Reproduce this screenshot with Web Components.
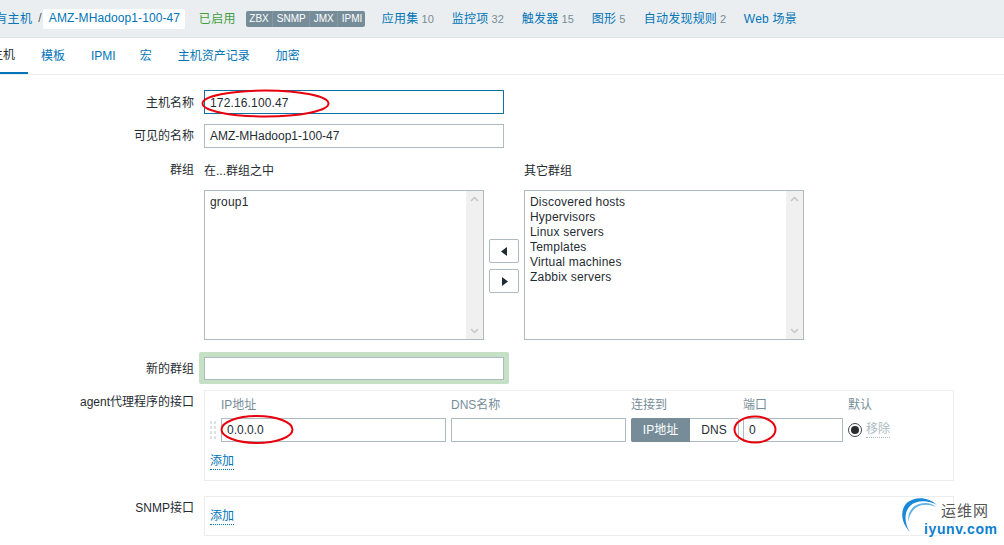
<!DOCTYPE html>
<html lang="zh"><head><meta charset="utf-8"><title>主机</title>
<style>
html,body{margin:0;padding:0;height:545px;overflow:hidden;background:#fff}
body{font:12px "Liberation Sans","Noto Sans CJK SC",sans-serif;color:#1f2c33;position:relative}
</style></head><body>
<z-header></z-header>
<z-tabs></z-tabs>
<z-form></z-form>
<z-marks></z-marks>
<z-logo></z-logo>
<script>
function def(name,css,html){customElements.define(name,class extends HTMLElement{constructor(){super();const r=this.attachShadow({mode:'open'});r.innerHTML='<style>'+css+'</style>'+html;}});}
const FONT='"Liberation Sans","Noto Sans CJK SC",sans-serif';
def('z-header',`:host{display:flex;align-items:center;height:37px;background:#ebeef0;border-bottom:1px solid #dfe4e7;white-space:nowrap;letter-spacing:.3px}
.crumb,.sep,.on,.l{margin-top:-2px}
.crumb{margin-left:-17px;color:#0275b8}.sep{margin-right:1px;margin-left:6px;color:#555}
.host{background:#fff;height:20px;line-height:19px;padding:0 6px;color:#0275b8;border-radius:2px;width:130px;letter-spacing:.1px;overflow:hidden}
.on{margin-left:14px;color:#3f9f3f;width:47px}
.badges{display:flex;height:16px;background:#768d99;color:#fff;border-radius:2px;line-height:16px;font-size:10px;letter-spacing:0;width:119px;margin-right:17px;box-sizing:border-box;overflow:hidden}
.badges span{padding:0 3.5px;border-right:1px solid #8698a2}.badges span:last-child{border:0}
.l{color:#0275b8;display:block;letter-spacing:.2px}.l i{font-style:normal;color:#768d99;margin-left:3px;font-size:11px}`,`<span class="crumb">所有主机</span><span class="sep">/</span><span class="host">AMZ-MHadoop1-100-47</span><span class="on">已启用</span>
<div class="badges"><span>ZBX</span><span>SNMP</span><span>JMX</span><span>IPMI</span></div>
<a class="l" style="width:70px">应用集<i>10</i></a><a class="l" style="width:70px">监控项<i>32</i></a><a class="l" style="width:70px">触发器<i>15</i></a><a class="l" style="width:52px">图形<i>5</i></a><a class="l" style="width:100px">自动发现规则<i>2</i></a><a class="l">Web 场景</a>`);
def('z-tabs',`:host{display:flex;height:36px;border-bottom:1px solid #ebeef0;margin-left:-22px;white-space:nowrap}
a{display:block;padding:0 13px;line-height:36px;color:#0275b8;height:36px;box-sizing:border-box}
a.on{color:#1f2c33;border-bottom:2px solid #0275b8;line-height:35px}`,`<a class="on">主机</a><a>模板</a><a style="margin-right:-2px">IPMI</a><a>宏</a><a>主机资产记录</a><a>加密</a>`);
def('z-input',`:host{display:block;box-sizing:border-box;height:var(--h,24px);width:var(--w,300px);border:1px solid #acbbc2;background:#fff;padding:0 5px;line-height:calc(var(--h,24px) - 2px);color:#1f2c33;white-space:nowrap;overflow:hidden}
:host([focus]){border-color:#0f6fa0;padding-top:1px;letter-spacing:.15px}`,`<slot></slot>`);
def('z-field',`:host{display:grid;grid-template-columns:194px 1fr;column-gap:10px}
.lab{text-align:right;color:#1f2c33;white-space:nowrap;padding-top:var(--lt,5px);line-height:14px}`,`<div class="lab"><slot name="label"></slot></div><div><slot></slot></div>`);
def('z-list',`:host{display:block;box-sizing:border-box;width:280px;height:150px;border:1px solid #acbbc2;position:relative;background:#fff}
.items{padding:4px 5px;line-height:15px;color:#1f2c33;letter-spacing:.2px}
.bar{position:absolute;right:0;top:0;bottom:0;width:17px;background:#f0f0f0;display:flex;flex-direction:column;justify-content:space-between;align-items:center;padding:5px 0;box-sizing:border-box}
svg{display:block}`,`<div class="items"><slot></slot></div><div class="bar"><svg width="9" height="6" viewBox="0 0 9 6"><path d="M1 5l3.5-3.5L8 5" fill="none" stroke="#c4c4c4" stroke-width="1.4"/></svg><svg width="9" height="6" viewBox="0 0 9 6"><path d="M1 1l3.5 3.5L8 1" fill="none" stroke="#c4c4c4" stroke-width="1.4"/></svg></div>`);
def('z-arrow',`:host{display:flex;align-items:center;justify-content:center;box-sizing:border-box;width:30px;height:24px;border:1px solid #acbbc2;border-radius:2px;background:#fff}`,`<slot></slot>`);
def('z-groups',`:host{display:grid;grid-template-columns:280px 40px 280px}
.h{height:26px;line-height:14px;color:#1f2c33;margin-top:1px}
.m{grid-row:2;display:flex;flex-direction:column;gap:6px;align-items:center;padding-top:49px}
.a{grid-column:1}.c{grid-column:3}`,`<div class="h a">在...群组之中</div><div class="h c">其它群组</div><div style="grid-row:2"><z-list>group1</z-list></div><div class="m"><z-arrow><svg width="7" height="9"><path d="M6 0v9L0 4.5z" fill="#1f2c33"/></svg></z-arrow><z-arrow><svg width="7" height="9"><path d="M1 0v9l6-4.5z" fill="#1f2c33"/></svg></z-arrow></div><div style="grid-row:2"><z-list>Discovered hosts<br>Hypervisors<br>Linux servers<br>Templates<br>Virtual machines<br>Zabbix servers</z-list></div>`);
def('z-add',`:host{display:inline-block;color:#0275b8;border-bottom:1px dotted #0275b8;line-height:14px;padding-bottom:1px}:host([muted]){color:#acbbc2;border-color:#acbbc2}`,`<slot></slot>`);
def('z-seg',`:host{display:flex;box-sizing:border-box;height:24px;width:108px;border:1px solid #acbbc2;border-radius:2px;background:#fff;line-height:22px;text-align:center}
.a{background:#768d99;color:#fff;width:59px;margin:-1px 0 -1px -1px;line-height:24px;border-radius:2px 0 0 2px}.b{flex:1;color:#1f2c33}`,`<div class="a">IP地址</div><div class="b">DNS</div>`);
def('z-grip',`:host{display:grid;grid-template-columns:2px 2px;gap:2px;align-content:center;height:24px}i{background:#dde2e5;height:3px;display:block}`,`<i></i><i></i><i></i><i></i><i></i><i></i><i></i><i></i>`);
def('z-radio',`:host{display:flex;width:14px;height:14px;box-sizing:border-box;border:1px solid #3c4a52;border-radius:50%;align-items:center;justify-content:center;background:#fff}b{display:block;width:8px;height:8px;border-radius:50%;background:#2b2b2b}`,`<b></b>`);
def('z-agent',`:host{display:block;box-sizing:border-box;width:750px;height:91px;border:1px solid #ebeef0;padding:7px 5px 0}
.g{display:grid;grid-template-columns:6px 225px 175px 107px 100px auto;column-gap:5px;align-items:center}
.t{color:#768d99;height:14px;line-height:14px;margin-bottom:6px;white-space:nowrap}
.d{display:flex;align-items:center;gap:4px;white-space:nowrap}.add{margin-top:12px}`,`<div class="g">
<div></div><div class="t">IP地址</div><div class="t">DNS名称</div><div class="t">连接到</div><div class="t">端口</div><div class="t">默认</div>
<z-grip></z-grip><z-input style="--w:225px">0.0.0.0</z-input><z-input style="--w:175px"></z-input><z-seg></z-seg><z-input style="--w:100px">0</z-input><div class="d"><z-radio></z-radio><z-add muted>移除</z-add></div></div>
<div class="add"><z-add>添加</z-add></div>`);
def('z-snmp',`:host{display:block;box-sizing:border-box;width:750px;height:40px;border:1px solid #ebeef0;padding:12px 5px 0}`,`<z-add>添加</z-add>`);
def('z-highlight',`:host{display:block;box-sizing:border-box;width:310px;height:32px;margin-left:-5px;background:#c5e0c5;padding:5px;border-radius:2px}`,`<slot></slot>`);
def('z-form',`:host{display:flex;flex-direction:column;padding-top:15px}`,`
<z-field style="--lt:6px"><span slot="label">主机名称</span><z-input focus>172.16.100.47</z-input></z-field>
<z-field style="margin-top:10px"><span slot="label">可见的名称</span><z-input>AMZ-MHadoop1-100-47</z-input></z-field>
<z-field style="margin-top:15px;--lt:0px"><span slot="label">群组</span><z-groups></z-groups></z-field>
<z-field style="margin-top:12px;--lt:10px"><span slot="label">新的群组</span><z-highlight><z-input style="--h:23px"></z-input></z-highlight></z-field>
<z-field style="margin-top:6px;--lt:5px"><span slot="label">agent代理程序的接口</span><z-agent></z-agent></z-field>
<z-field style="margin-top:15px;--lt:5px"><span slot="label">SNMP接口</span><z-snmp></z-snmp></z-field>`);
def('z-marks',`:host{position:absolute;left:0;top:0;width:1004px;height:545px;pointer-events:none}svg{display:block}`,`<svg width="1004" height="545" fill="none" stroke="#e8000c" stroke-width="2"><ellipse cx="265.5" cy="103.5" rx="63" ry="13"/><ellipse cx="257" cy="429.5" rx="35.5" ry="13.5"/><ellipse cx="755" cy="429.5" rx="20.5" ry="13"/></svg>`);
def('z-logo',`:host{position:absolute;left:898px;top:495px;width:106px;height:50px;font-family:${FONT}}
svg{position:absolute;left:0;top:0}
.a{position:absolute;left:43px;top:7px;font-size:15px;letter-spacing:1px;color:#555;line-height:18px;white-space:nowrap}
.b{position:absolute;left:26px;top:26px;font-size:14px;font-weight:bold;color:#0b7fd0;line-height:16px;letter-spacing:.6px;white-space:nowrap}`,`<svg width="50" height="50"><path d="M12 37C2 27 2 13 10 7C18 1 31 2 39 10C30 5 18 5 12 11C6 17 6 28 12 37Z" fill="#1a88d8"/><path d="M10.5 27C9 18 14 11 21 9C27 7 34 8 38 12C31 9 24 9 19 12C14 15 11 21 10.5 27Z" fill="#5fb2e8"/></svg><div class="a">运维网</div><div class="b">iyunv.com</div>`);
</script>
</body></html>
